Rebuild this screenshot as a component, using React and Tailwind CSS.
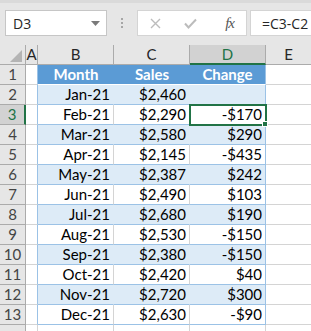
import React from 'react';

const rows = [
  ['Jan-21', '$2,460', ''],
  ['Feb-21', '$2,290', '-$170'],
  ['Mar-21', '$2,580', '$290'],
  ['Apr-21', '$2,145', '-$435'],
  ['May-21', '$2,387', '$242'],
  ['Jun-21', '$2,490', '$103'],
  ['Jul-21', '$2,680', '$190'],
  ['Aug-21', '$2,530', '-$150'],
  ['Sep-21', '$2,380', '-$150'],
  ['Oct-21', '$2,420', '$40'],
  ['Nov-21', '$2,720', '$300'],
  ['Dec-21', '$2,630', '-$90'],
];

const FormulaBar = () => (
  <div className="h-[45px] bg-[#e6e6e6] border-t-[3px] border-[#dadada] flex items-start pt-[7px] font-['Open_Sans',sans-serif]">
    <div className="ml-[5px] w-[102px] h-[26px] bg-white border border-[#c6c6c6] flex items-center pl-[7px] pr-[6px] text-[14px] text-[#262626]">
      <span className="flex-1">D3</span>
      <svg width="9" height="5" viewBox="0 0 9 5">
        <polygon points="0,0 9,0 4.5,5" fill="#7a7a7a" />
      </svg>
    </div>
    <div className="w-[30px] h-[26px] flex flex-col items-center justify-center gap-[2px]">
      <div className="w-[2px] h-[2px] bg-[#a6a6a6]" />
      <div className="w-[2px] h-[2px] bg-[#a6a6a6]" />
      <div className="w-[2px] h-[2px] bg-[#a6a6a6]" />
    </div>
    <div className="w-[110px] h-[26px] bg-white border border-[#d4d4d4] flex items-center">
      <svg className="ml-[12px]" width="11" height="11" viewBox="0 0 11 11">
        <path d="M1 1 L10 10 M10 1 L1 10" stroke="#bcbcbc" strokeWidth="1.4" />
      </svg>
      <svg className="ml-[23px]" width="13" height="11" viewBox="0 0 13 11">
        <path d="M1 5.5 L4.5 9.5 L12 1.5" stroke="#bcbcbc" strokeWidth="2" fill="none" />
      </svg>
      <span className="ml-auto mr-[12px] font-['Liberation_Serif',serif] italic text-[15px] text-[#555] tracking-[-1px]">fx</span>
    </div>
    <div className="ml-[3px] flex-1 h-[26px] bg-white border border-[#d4d4d4] border-r-0 flex items-center pl-[11px] text-[14px] text-[#262626]">
      =C3-C2
    </div>
  </div>
);

const ColHeader = () => (
  <div className="flex h-[20px] bg-[#e6e6e6] text-[15px] text-[#262626] font-['Lato',sans-serif]">
    <div className="w-[26px] shrink-0 border-r border-b border-[#ababab] flex items-end justify-end pr-[3px] pb-[2px]">
      <svg width="12" height="12" viewBox="0 0 12 12">
        <polygon points="12,0 12,12 0,12" fill="#b4b4b4" />
      </svg>
    </div>
    <div className="w-[12px] shrink-0 border-r border-b border-[#ababab] flex items-center justify-center leading-none">A</div>
    <div className="w-[76px] shrink-0 border-r border-b border-[#ababab] flex items-center justify-center leading-none">B</div>
    <div className="w-[76px] shrink-0 border-r border-b border-[#ababab] flex items-center justify-center leading-none">C</div>
    <div className="w-[76px] shrink-0 border-r border-[#ababab] border-b-2 border-b-[#217346] bg-[#d2d2d2] text-[#217346] flex items-center justify-center leading-none">D</div>
    <div className="flex-1 border-b border-[#ababab] flex items-center justify-center leading-none">E</div>
  </div>
);

const TitleRow = () => (
  <div className="flex h-[20px] text-[15px] font-['Lato',sans-serif]">
    <div className="w-[26px] shrink-0 bg-[#e6e6e6] border-r border-b border-[#ababab] flex items-center justify-center text-[#444]">1</div>
    <div className="w-[12px] shrink-0 border-r border-b border-r-[#9bc2e6] border-b-[#d4d4d4]" />
    <div className="w-[76px] shrink-0 bg-[#5b9bd5] border-b border-white flex items-center justify-center font-bold text-white">Month</div>
    <div className="w-[76px] shrink-0 bg-[#5b9bd5] border-b border-white flex items-center justify-center font-bold text-white">Sales</div>
    <div className="w-[76px] shrink-0 bg-[#5b9bd5] border-b border-r border-white border-r-[#9bc2e6] flex items-center justify-center font-bold text-white">Change</div>
    <div className="flex-1 border-b border-[#d4d4d4]" />
  </div>
);

const DataRow = ({ n, r }) => {
  const band = n % 2 === 0;
  const selected = n === 3;
  const fill = band ? 'bg-[#ddebf7] border-r-[#ddebf7]' : 'bg-white border-r-[#d4d4d4]';
  return (
    <div className="flex h-[20px] text-[15px] font-['Lato',sans-serif] text-black">
      <div
        className={
          selected
            ? 'w-[26px] shrink-0 bg-[#d2d2d2] border-b border-[#ababab] border-r-2 border-r-[#217346] flex items-center justify-center text-[#217346]'
            : 'w-[26px] shrink-0 bg-[#e6e6e6] border-r border-b border-[#ababab] flex items-center justify-center text-[#444]'
        }
      >
        {n}
      </div>
      <div className="w-[12px] shrink-0 border-r border-b border-r-[#9bc2e6] border-b-[#d4d4d4]" />
      <div className={`w-[76px] shrink-0 border-r border-b border-b-[#9bc2e6] ${fill} flex items-center justify-end pr-[3px]`}>{r[0]}</div>
      <div className={`w-[76px] shrink-0 border-r border-b border-b-[#9bc2e6] ${fill} flex items-center justify-end pr-[3px]`}>{r[1]}</div>
      <div className={`relative w-[76px] shrink-0 border-r border-b border-b-[#9bc2e6] border-r-[#9bc2e6] ${band ? 'bg-[#ddebf7]' : 'bg-white'} flex items-center justify-end pr-[3px]`}>
        {r[2]}
        {selected && (
          <>
            <div className="absolute z-10 -left-[1px] -top-[1px] w-[78px] h-[22px] border-2 border-[#217346]" />
            <div className="absolute z-20 -right-[3px] -bottom-[3px] w-[6px] h-[6px] bg-[#217346] border border-white" />
          </>
        )}
      </div>
      <div className="flex-1 border-b border-[#d4d4d4]" />
    </div>
  );
};

const EmptyRow = () => (
  <div className="flex h-[20px] text-[15px] font-['Lato',sans-serif]">
    <div className="w-[26px] shrink-0 bg-[#e6e6e6] border-r border-b border-[#ababab]" />
    <div className="w-[12px] shrink-0 border-r border-b border-[#d4d4d4]" />
    <div className="w-[76px] shrink-0 border-r border-b border-[#d4d4d4]" />
    <div className="w-[76px] shrink-0 border-r border-b border-[#d4d4d4]" />
    <div className="w-[76px] shrink-0 border-r border-b border-[#d4d4d4]" />
    <div className="flex-1 border-b border-[#d4d4d4]" />
  </div>
);

export default function App() {
  return (
    <div className="w-[311px] h-[331px] overflow-hidden bg-white">
      <FormulaBar />
      <ColHeader />
      <TitleRow />
      {rows.map((r, i) => (
        <DataRow key={i} n={i + 2} r={r} />
      ))}
      <EmptyRow />
    </div>
  );
}
